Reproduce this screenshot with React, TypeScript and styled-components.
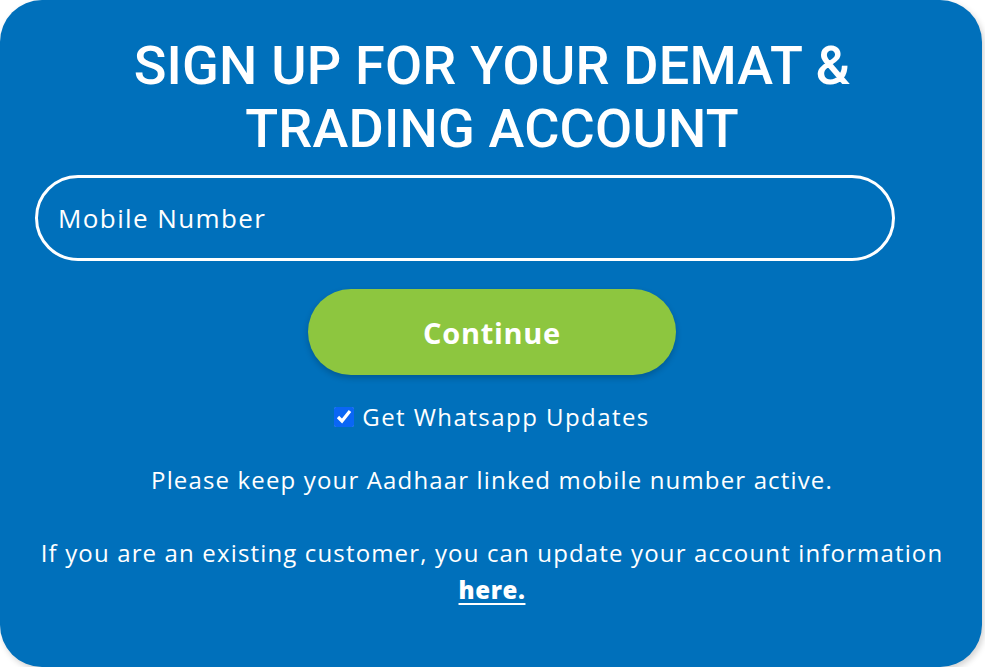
import { useState } from "react";
import styled, { createGlobalStyle } from "styled-components";

const GlobalStyle = createGlobalStyle`
    html, body {
        margin: 0;
        padding: 0;
        background: #ffffff;
    }
    * {
        box-sizing: border-box;
    }
`

const Card = styled.div`
    width: 982px;
    height: 667px;
    background-color: #0070bb;
    border-radius: 42px;
    box-shadow: 2px 3px 6px rgba(0,0,0,0.18);
    padding: 34px 0 0 35px;
    display: flex;
    flex-direction: column;
    align-items: flex-start;
    color: #fff;
    font-family: "Open Sans", "Noto Sans", sans-serif;
`
const Title = styled.h1`
    margin: 0;
    width: 914px;
    text-align: center;
    font-family: Roboto, "Liberation Sans", sans-serif;
    font-weight: 500;
    font-size: 54px;
    line-height: 63px;
    letter-spacing: 0.2px;
    text-transform: uppercase;
`
const Field = styled.input`
    margin-top: 15px;
    width: 860px;
    height: 86px;
    border: 3px solid #fff;
    border-radius: 43px;
    background: transparent;
    padding: 0 20px;
    color: #fff;
    font-family: inherit;
    font-size: 26px;
    letter-spacing: 1.4px;
    outline: none;
    &::placeholder {
        color: #fff;
        opacity: 1;
    }
`
const Column = styled.div`
    width: 914px;
    display: flex;
    flex-direction: column;
    align-items: center;
`
const ContinueButton = styled.button`
    margin-top: 28px;
    width: 368px;
    height: 86px;
    border: none;
    border-radius: 43px;
    background-color: #8dc63f;
    box-shadow: 0 3px 6px rgba(0,0,0,0.2);
    color: #fff;
    font-family: inherit;
    font-weight: 700;
    font-size: 29px;
    letter-spacing: 0.7px;
    cursor: pointer;
`
const CheckRow = styled.label`
    margin-top: 27px;
    display: flex;
    align-items: center;
    gap: 8px;
    font-size: 24px;
    letter-spacing: 1.45px;
    line-height: 30px;
`
const Check = styled.input`
    margin: 0;
    width: 20px;
    height: 20px;
    accent-color: #0a66f5;
`
const Note = styled.p<{ $top: number }>`
    margin: ${p => p.$top}px 0 0;
    text-align: center;
    font-size: 24px;
    letter-spacing: 1.15px;
    line-height: 37px;
`
const Link = styled.a`
    color: #fff;
    font-weight: 800;
    letter-spacing: 0.6px;
    text-decoration: underline;
    text-underline-offset: 4px;
`

export default function App() {
    const [whatsapp, setWhatsapp] = useState(true)
    const [mobile, setMobile] = useState("")

    return (
        <>
            <GlobalStyle />
            <Card>
                <Title>Sign up for your Demat &amp;<br />Trading Account</Title>
                <Field
                    type="tel"
                    placeholder="Mobile Number"
                    value={mobile}
                    onChange={(e) => setMobile(e.target.value)}
                />
                <Column>
                    <ContinueButton>Continue</ContinueButton>
                    <CheckRow>
                        <Check
                            type="checkbox"
                            checked={whatsapp}
                            onChange={(e) => setWhatsapp(e.target.checked)}
                        />
                        Get Whatsapp Updates
                    </CheckRow>
                    <Note $top={29}>Please keep your Aadhaar linked mobile number active.</Note>
                    <Note $top={36}>
                        If you are an existing customer, you can update your account information
                        <br />
                        <Link href="#">here.</Link>
                    </Note>
                </Column>
            </Card>
        </>
    )
}
